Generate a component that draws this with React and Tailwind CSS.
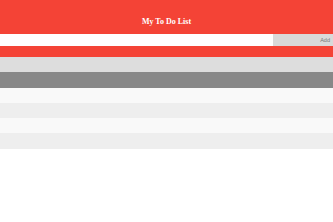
export default function App() {
  const rows = ["bg-[#dddddd]", "bg-[#888888]", "bg-[#f9f9f9]", "bg-[#eeeeee]", "bg-[#f9f9f9]", "bg-[#eeeeee]"];
  return (
    <div className="w-[333px] h-[222px] bg-white overflow-hidden">
      <div className="bg-[#f44336] h-[57px]">
        <div className="h-[34px] pt-[17px] text-center text-white font-bold text-[8px] leading-[10px]" style={{ fontFamily: '"Liberation Serif", serif' }}>
          My To Do List
        </div>
        <div className="flex h-[12px]">
          <input className="flex-1 min-w-0 bg-white border-0 outline-none" />
          <div className="w-[60px] bg-[#d9d9d9] text-[#777] text-[5.5px] leading-[12px] text-right pr-[3px]" style={{ fontFamily: '"Liberation Sans", sans-serif' }}>
            Add
          </div>
        </div>
      </div>
      {rows.map((c, i) => (
        <div key={i} className={`${c} h-[15.3px]`} />
      ))}
    </div>
  );
}
